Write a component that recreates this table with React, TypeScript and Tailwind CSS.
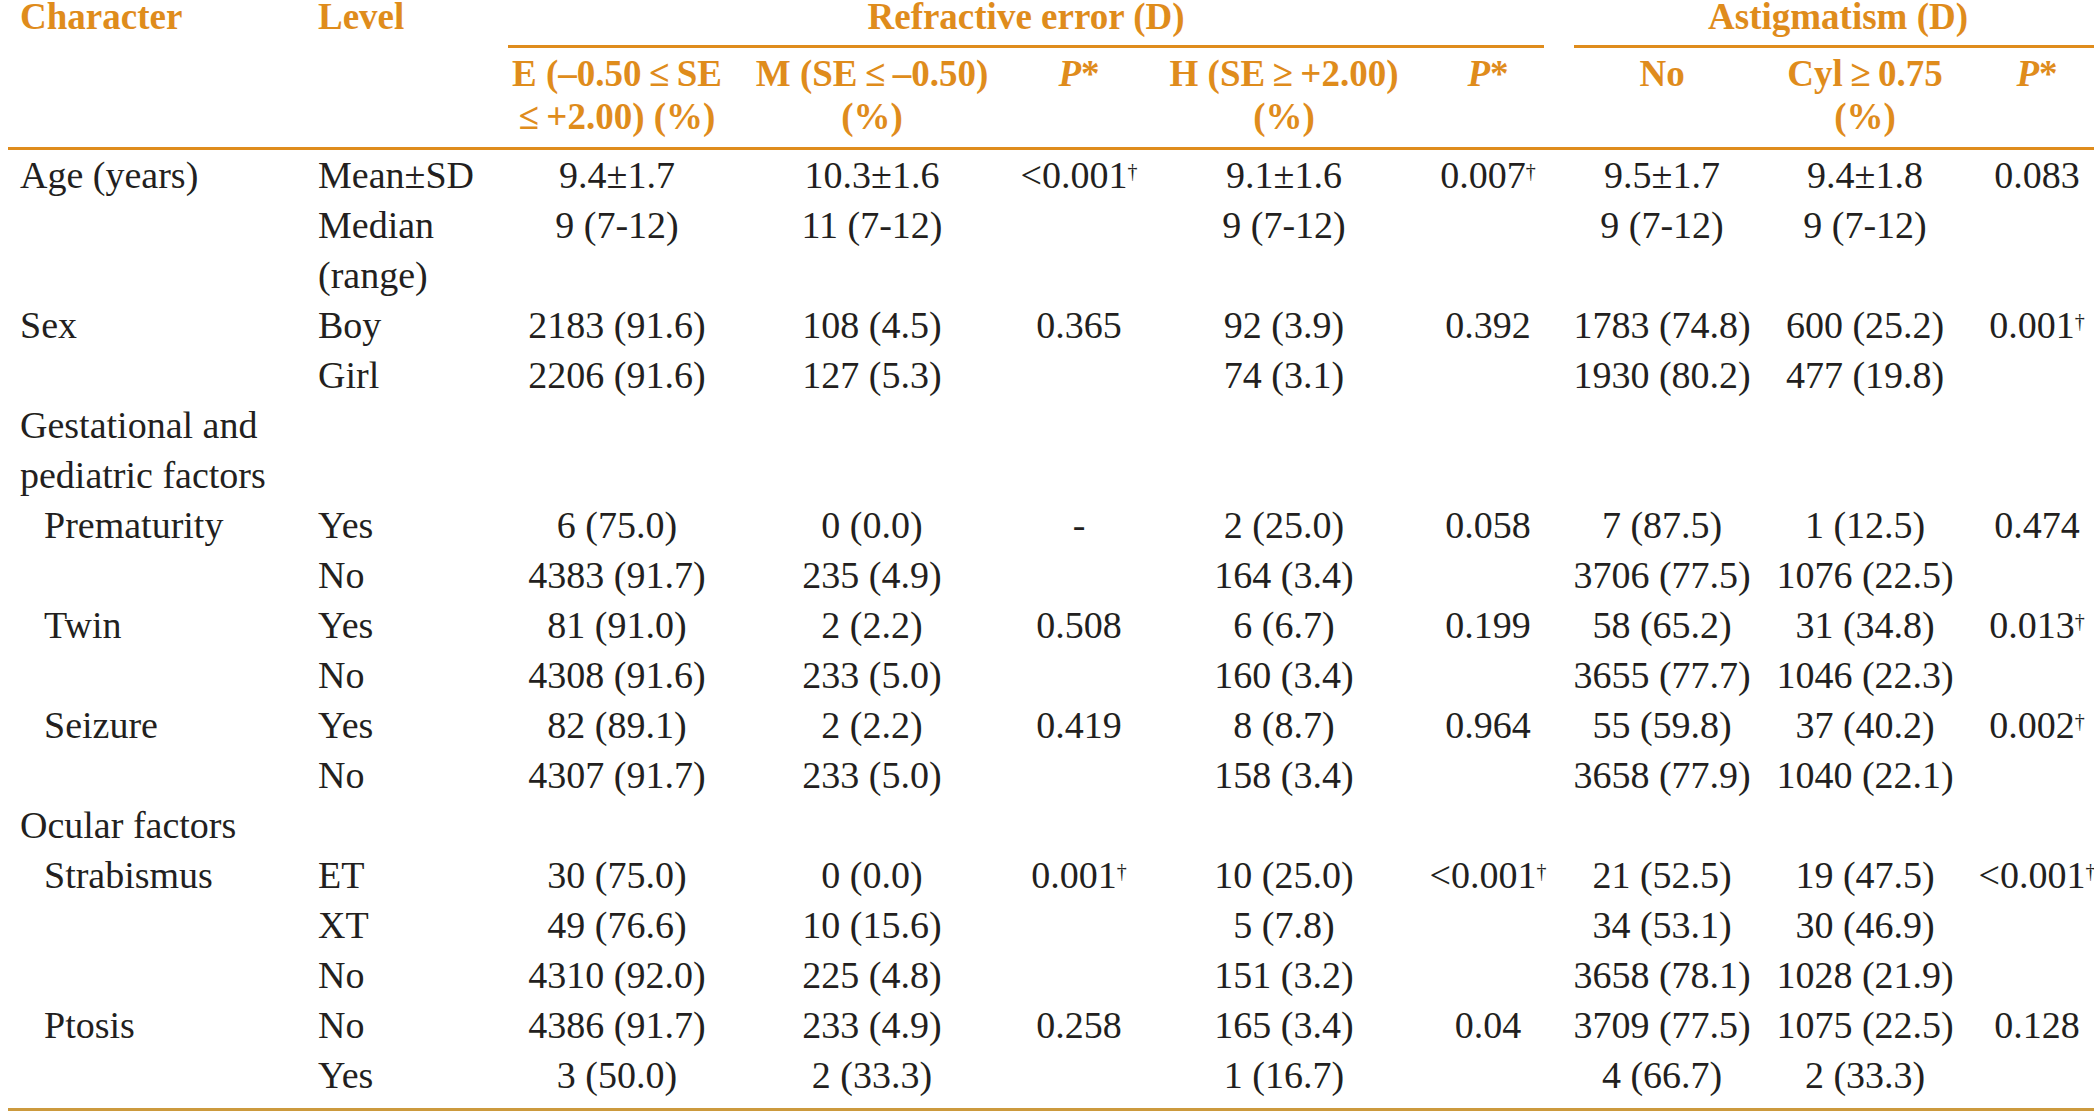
import type { ReactNode } from 'react';

type Row = {
  character?: ReactNode;
  indent?: boolean;
  level?: ReactNode;
  values?: ReactNode[];
};

const dag = (v: string) => (
  <>
    {v}
    <sup className="text-[20px]">†</sup>
  </>
);

const rows: Row[] = [
  { character: 'Age (years)', level: 'Mean±SD', values: ['9.4±1.7', '10.3±1.6', dag('<0.001'), '9.1±1.6', dag('0.007'), '9.5±1.7', '9.4±1.8', '0.083'] },
  { level: <>Median<br />(range)</>, values: ['9 (7-12)', '11 (7-12)', '', '9 (7-12)', '', '9 (7-12)', '9 (7-12)', ''] },
  { character: 'Sex', level: 'Boy', values: ['2183 (91.6)', '108 (4.5)', '0.365', '92 (3.9)', '0.392', '1783 (74.8)', '600 (25.2)', dag('0.001')] },
  { level: 'Girl', values: ['2206 (91.6)', '127 (5.3)', '', '74 (3.1)', '', '1930 (80.2)', '477 (19.8)', ''] },
  { character: <>Gestational and<br />pediatric factors</> },
  { character: 'Prematurity', indent: true, level: 'Yes', values: ['6 (75.0)', '0 (0.0)', '-', '2 (25.0)', '0.058', '7 (87.5)', '1 (12.5)', '0.474'] },
  { level: 'No', values: ['4383 (91.7)', '235 (4.9)', '', '164 (3.4)', '', '3706 (77.5)', '1076 (22.5)', ''] },
  { character: 'Twin', indent: true, level: 'Yes', values: ['81 (91.0)', '2 (2.2)', '0.508', '6 (6.7)', '0.199', '58 (65.2)', '31 (34.8)', dag('0.013')] },
  { level: 'No', values: ['4308 (91.6)', '233 (5.0)', '', '160 (3.4)', '', '3655 (77.7)', '1046 (22.3)', ''] },
  { character: 'Seizure', indent: true, level: 'Yes', values: ['82 (89.1)', '2 (2.2)', '0.419', '8 (8.7)', '0.964', '55 (59.8)', '37 (40.2)', dag('0.002')] },
  { level: 'No', values: ['4307 (91.7)', '233 (5.0)', '', '158 (3.4)', '', '3658 (77.9)', '1040 (22.1)', ''] },
  { character: 'Ocular factors' },
  { character: 'Strabismus', indent: true, level: 'ET', values: ['30 (75.0)', '0 (0.0)', dag('0.001'), '10 (25.0)', dag('<0.001'), '21 (52.5)', '19 (47.5)', dag('<0.001')] },
  { level: 'XT', values: ['49 (76.6)', '10 (15.6)', '', '5 (7.8)', '', '34 (53.1)', '30 (46.9)', ''] },
  { level: 'No', values: ['4310 (92.0)', '225 (4.8)', '', '151 (3.2)', '', '3658 (78.1)', '1028 (21.9)', ''] },
  { character: 'Ptosis', indent: true, level: 'No', values: ['4386 (91.7)', '233 (4.9)', '0.258', '165 (3.4)', '0.04', '3709 (77.5)', '1075 (22.5)', '0.128'] },
  { level: 'Yes', values: ['3 (50.0)', '2 (33.3)', '', '1 (16.7)', '', '4 (66.7)', '2 (33.3)', ''] },
];

const widths = [310, 172, 254, 256, 158, 252, 156, 192, 214, 130];

const sub = 'p-0 pt-[4px] pb-[9px] leading-[43px] align-top text-center font-bold whitespace-nowrap border-b-[3px] border-[#df8c1c]';

export default function App() {
  return (
    <div className="w-[2094px] h-[1115px] overflow-hidden bg-white">
      <table
        className="ml-[8px] w-[2094px] table-fixed border-separate border-spacing-0 text-[38px] text-[#231f20]"
        style={{ fontFamily: '"Liberation Serif", "Times New Roman", serif' }}
      >
        <colgroup>
          {widths.map((w, i) => (
            <col key={i} style={{ width: w }} />
          ))}
        </colgroup>
        <thead className="text-[37px] text-[#df8c1c]">
          <tr>
            <th className="p-0 pl-[12px] leading-[33px] align-top text-left font-bold">Character</th>
            <th className="p-0 leading-[33px] align-top text-left font-bold">Level</th>
            <th colSpan={5} className="p-0 align-top font-bold">
              <div className="ml-[18px] mr-[22px] border-b-[3px] border-[#df8c1c] pb-[12px] leading-[33px]">
                Refractive error (D)
              </div>
            </th>
            <th colSpan={3} className="p-0 align-top font-bold">
              <div className="ml-[8px] border-b-[3px] border-[#df8c1c] pb-[12px] leading-[33px]">
                Astigmatism (D)
              </div>
            </th>
          </tr>
          <tr>
            <th className={sub}></th>
            <th className={sub}></th>
            <th className={sub}>
              E (–0.50{'\u2009'}≤{'\u2009'}SE
              <br />≤{'\u2009'}+2.00) (%)
            </th>
            <th className={sub}>
              M (SE{'\u2009'}≤{'\u2009'}–0.50)
              <br />
              (%)
            </th>
            <th className={sub}>
              <i>P</i>*
            </th>
            <th className={sub}>
              H (SE{'\u2009'}≥{'\u2009'}+2.00)
              <br />
              (%)
            </th>
            <th className={sub}>
              <i>P</i>*
            </th>
            <th className={sub}>No</th>
            <th className={sub}>
              Cyl{'\u2009'}≥{'\u2009'}0.75
              <br />
              (%)
            </th>
            <th className={sub}>
              <i>P</i>*
            </th>
          </tr>
        </thead>
        <tbody>
          {rows.map((row, index) => {
            const last = index === rows.length - 1;
            const cell = `p-0 leading-[50px] align-top ${last ? 'pb-[8px] border-b-[3px] border-[#cc9a3d]' : ''}`;
            const values = row.values ?? ['', '', '', '', '', '', '', ''];
            return (
              <tr key={index}>
                <td className={`${cell} ${row.indent ? 'pl-[36px]' : 'pl-[12px]'} text-left whitespace-nowrap`}>
                  {row.character}
                </td>
                <td className={`${cell} text-left whitespace-nowrap`}>{row.level}</td>
                {values.map((v, i) => (
                  <td key={i} className={`${cell} text-center whitespace-nowrap`}>
                    {v}
                  </td>
                ))}
              </tr>
            );
          })}
        </tbody>
      </table>
    </div>
  );
}
